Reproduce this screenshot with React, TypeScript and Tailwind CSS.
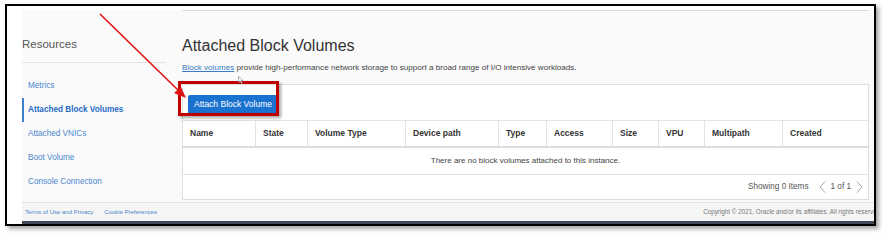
import React from "react";

const nav = [
  { label: "Metrics", active: false },
  { label: "Attached Block Volumes", active: true },
  { label: "Attached VNICs", active: false },
  { label: "Boot Volume", active: false },
  { label: "Console Connection", active: false },
];

const columns = [
  { label: "Name", w: "w-[73px]" },
  { label: "State", w: "w-[52px]" },
  { label: "Volume Type", w: "w-[98px]" },
  { label: "Device path", w: "w-[93px]" },
  { label: "Type", w: "w-[48px]" },
  { label: "Access", w: "w-[66px]" },
  { label: "Size", w: "w-[46px]" },
  { label: "VPU", w: "w-[46px]" },
  { label: "Multipath", w: "w-[78px]" },
  { label: "Created", w: "flex-1" },
];

function Chevron({ dir }: { dir: "left" | "right" }) {
  return (
    <svg width="7" height="12" viewBox="0 0 7 12" className="shrink-0">
      <path
        d={dir === "left" ? "M6 0.5 L1 6 L6 11.5" : "M1 0.5 L6 6 L1 11.5"}
        fill="none"
        stroke="#9a9a9a"
        strokeWidth="0.9"
      />
    </svg>
  );
}

export default function App() {
  return (
    <div className="relative w-[885px] h-[235px] bg-white font-['Liberation_Sans',Arial,sans-serif] overflow-hidden">
      {/* framed screenshot */}
      <div className="absolute left-[5px] top-[4px] w-[871px] h-[222px] border-2 border-black bg-white shadow-[3px_3px_4px_rgba(0,0,0,0.35)] flex flex-col overflow-hidden">
        <div className="flex flex-1 pl-[15px] pt-[4px]">
          {/* Left column: resources nav */}
          <div className="w-[160px] bg-[#fafafa] flex flex-col">
            <div className="h-[53px] flex items-center pt-[17px] border-b border-[#e2e2e2] mr-[16px]">
              <span className="text-[11.5px] text-[#555]">Resources</span>
            </div>
            <ul className="mt-[11px] flex flex-col">
              {nav.map((n) => (
                <li
                  key={n.label}
                  className={
                    n.active
                      ? "h-[24px] flex items-center pl-[4px] border-l-2 border-[#3f7fd0] text-[8.2px] font-bold text-[#1f6ac6]"
                      : "h-[24px] flex items-center pl-[6px] text-[8.2px] text-[#4a86cc]"
                  }
                >
                  {n.label}
                </li>
              ))}
            </ul>
          </div>

          {/* Right column: attached block volumes */}
          <div className="flex-1 bg-[#fafafa] pr-[5px] flex flex-col">
            <div className="border-t border-[#dcdcdc] flex-1 flex flex-col">
              <h1 className="mt-[26px] text-[16px] leading-[18px] text-[#333]">Attached Block Volumes</h1>
              <p className="mt-[8px] text-[8.1px] leading-[10px] text-[#444]">
                <span className="text-[#3a7bc8] underline">Block volumes</span> provide high-performance network storage to support a broad range of I/O intensive workloads.
              </p>

              <div className="mt-[11px] h-[116px] border border-[#dedede] bg-white flex flex-col">
                <div className="h-[35px] flex items-center pl-[5px]">
                  <div className="relative">
                    <button className="h-[20px] px-[6px] rounded-[2px] bg-[#1a72d0] text-white text-[8.5px]">
                      Attach Block Volume
                    </button>
                    <div className="absolute -left-[10px] -top-[9px] w-[101px] h-[35px] border-[3px] border-[#c00000] shadow-[2px_2px_3px_rgba(0,0,0,0.35)]" />
                  </div>
                </div>
                <div className="h-[28px] flex border-t border-[#e3e3e3] border-b-2 border-b-[#dcdcdc]">
                  {columns.map((c, i) => (
                    <div
                      key={c.label}
                      className={
                        c.w +
                        " flex items-center pl-[7px] text-[8.5px] font-bold text-[#333]" +
                        (i < columns.length - 1 ? " border-r border-[#e3e3e3]" : "")
                      }
                    >
                      {c.label}
                    </div>
                  ))}
                </div>
                <div className="h-[27px] flex items-center justify-center border-b border-[#e3e3e3] text-[8px] text-[#444]">
                  There are no block volumes attached to this instance.
                </div>
                <div className="flex-1 flex items-center justify-end pr-[5px] text-[8.2px] text-[#555]">
                  <span>Showing 0 Items</span>
                  <span className="ml-[10px]"><Chevron dir="left" /></span>
                  <span className="ml-[5px]">1 of 1</span>
                  <span className="ml-[5px]"><Chevron dir="right" /></span>
                </div>
              </div>
            </div>
          </div>
        </div>

        {/* footer */}
        <div className="ml-[15px] h-[19px] border-t border-[#e2e2e2] bg-[#f5f5f5] flex items-center justify-between pl-[3px]">
          <div className="flex gap-[11px] text-[6px] text-[#4a86cc]">
            <span>Terms of Use and Privacy</span>
            <span>Cookie Preferences</span>
          </div>
          <span className="text-[6.3px] text-[#777] whitespace-nowrap -mr-[8px]">
            Copyright © 2021, Oracle and/or its affiliates. All rights reserved.
          </span>
        </div>
        <div className="ml-[15px] h-[3px] bg-[#3c4b57]" />
      </div>

      {/* annotation arrow */}
      <svg className="absolute left-0 top-0" width="885" height="235" viewBox="0 0 885 235">
        <line x1="100" y1="14" x2="180" y2="92" stroke="#e01010" strokeWidth="1.6" />
        <polygon points="186,98 174,93 181,87" fill="#e01010" />
      </svg>
      {/* mouse pointer */}
      <svg className="absolute left-[238px] top-[76px]" width="6" height="8" viewBox="0 0 6 8">
        <path d="M0.5 0.5 L0.5 6.5 L2 5 L3.5 7.5 L4.5 7 L3 4.5 L5 4.5 Z" fill="#fff" stroke="#777" strokeWidth="0.6" />
      </svg>
    </div>
  );
}
